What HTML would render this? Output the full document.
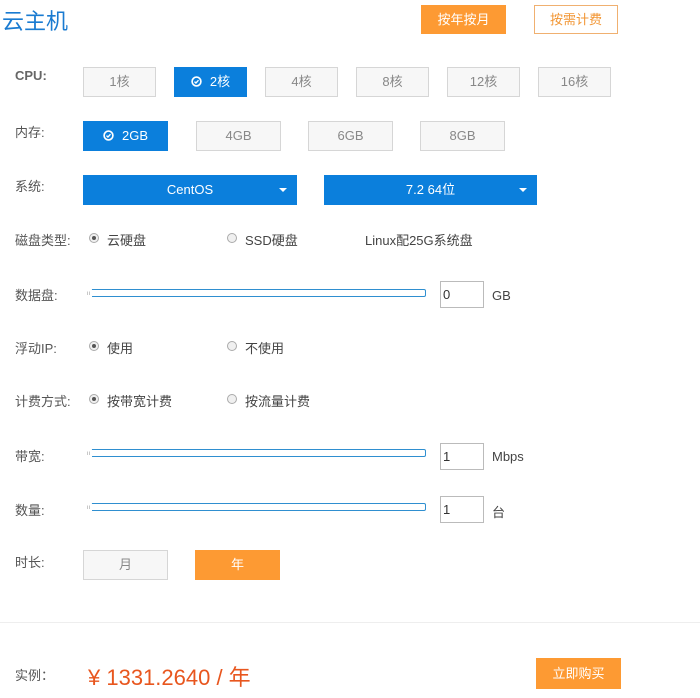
<!DOCTYPE html>
<html><head><meta charset="utf-8"><style>
body{margin:0;width:700px;height:698px;background:#fff;position:relative;overflow:hidden;font-family:"Liberation Sans","Noto Sans CJK SC",sans-serif;font-size:13px;color:#555}
.a{position:absolute}
.lbl{position:absolute;left:15px;font-size:13px;color:#555}
.b{position:absolute;box-sizing:border-box;border:1px solid #d6d6d6;background:#f7f7f7;color:#888;text-align:center;font-size:13px}
.sel{background:#0b7fdc;border-color:#0b7fdc;color:#fff}
.or{background:#fd9a33;border-color:#fd9a33;color:#fff}
.r{position:absolute;width:8px;height:8px;border:1px solid #aaa;border-radius:50%;background:#f0f0f0}
.r.on::after{content:"";position:absolute;left:2px;top:2px;width:4px;height:4px;border-radius:50%;background:#555}
.t{position:absolute;font-size:13px;color:#444}
.sl{position:absolute;left:87px;width:337px;height:6px;border:1.5px solid #2f8fd0;border-radius:2px;background:#fff}
.h{position:absolute;left:85px;width:7px;height:12px;background:#fff;border-radius:2px;font-size:6px;color:#999;text-align:center;line-height:12px}
.in{position:absolute;left:440px;width:44px;height:27px;box-sizing:border-box;border:1px solid #bbb;padding-left:2px;line-height:25px;color:#333;font-size:13px}
.chk{display:inline-block;width:11px;height:11px;margin-right:8px;vertical-align:-1px}
</style></head><body>
<div class="a" style="left:2px;top:4px;font-size:22px;color:#1a7bd1">云主机</div>
<div class="b or" style="left:421px;top:5px;width:85px;height:29px;line-height:27px">按年按月</div>
<div class="b" style="left:534px;top:5px;width:84px;height:29px;line-height:27px;background:#fff;border-color:#f0b070;color:#f29634">按需计费</div>

<div class="lbl" style="top:68px;font-weight:bold;color:#666">CPU:</div>
<div class="b" style="left:83px;top:67px;width:73px;height:30px;line-height:28px">1核</div>
<div class="b sel" style="left:174px;top:67px;width:73px;height:30px;line-height:28px"><svg class="chk" viewBox="0 0 12 12"><circle cx="6" cy="6" r="4.8" fill="none" stroke="#fff" stroke-width="1.8"/><path d="M3.8 6.1l1.6 1.5 2.8-3" fill="none" stroke="#fff" stroke-width="1.5"/></svg>2核</div>
<div class="b" style="left:265px;top:67px;width:73px;height:30px;line-height:28px">4核</div>
<div class="b" style="left:356px;top:67px;width:73px;height:30px;line-height:28px">8核</div>
<div class="b" style="left:447px;top:67px;width:73px;height:30px;line-height:28px">12核</div>
<div class="b" style="left:538px;top:67px;width:73px;height:30px;line-height:28px">16核</div>

<div class="lbl" style="top:122px">内存:</div>
<div class="b sel" style="left:83px;top:121px;width:85px;height:30px;line-height:28px"><svg class="chk" viewBox="0 0 12 12"><circle cx="6" cy="6" r="4.8" fill="none" stroke="#fff" stroke-width="1.8"/><path d="M3.8 6.1l1.6 1.5 2.8-3" fill="none" stroke="#fff" stroke-width="1.5"/></svg>2GB</div>
<div class="b" style="left:196px;top:121px;width:85px;height:30px;line-height:28px">4GB</div>
<div class="b" style="left:308px;top:121px;width:85px;height:30px;line-height:28px">6GB</div>
<div class="b" style="left:420px;top:121px;width:85px;height:30px;line-height:28px">8GB</div>

<div class="lbl" style="top:176px">系统:</div>
<div class="b sel" style="left:83px;top:175px;width:214px;height:30px;line-height:28px">CentOS<span style="position:absolute;right:9px;top:12px;border:4px solid transparent;border-top:4px solid #fff;border-bottom:0"></span></div>
<div class="b sel" style="left:324px;top:175px;width:213px;height:30px;line-height:28px">7.2 64位<span style="position:absolute;right:9px;top:12px;border:4px solid transparent;border-top:4px solid #fff;border-bottom:0"></span></div>

<div class="lbl" style="top:230px">磁盘类型:</div>
<div class="r on" style="left:89px;top:233px"></div><div class="t" style="left:107px;top:230px">云硬盘</div>
<div class="r" style="left:227px;top:233px"></div><div class="t" style="left:245px;top:230px">SSD硬盘</div>
<div class="t" style="left:365px;top:230px">Linux配25G系统盘</div>

<div class="lbl" style="top:285px">数据盘:</div>
<div class="sl" style="top:289px"></div><div class="h" style="top:288px">ıı</div>
<div class="in" style="top:281px">0</div><div class="t" style="left:492px;top:288px">GB</div>

<div class="lbl" style="top:338px">浮动IP:</div>
<div class="r on" style="left:89px;top:341px"></div><div class="t" style="left:107px;top:338px">使用</div>
<div class="r" style="left:227px;top:341px"></div><div class="t" style="left:245px;top:338px">不使用</div>

<div class="lbl" style="top:391px">计费方式:</div>
<div class="r on" style="left:89px;top:394px"></div><div class="t" style="left:107px;top:391px">按带宽计费</div>
<div class="r" style="left:227px;top:394px"></div><div class="t" style="left:245px;top:391px">按流量计费</div>

<div class="lbl" style="top:446px">带宽:</div>
<div class="sl" style="top:449px"></div><div class="h" style="top:448px">ıı</div>
<div class="in" style="top:443px">1</div><div class="t" style="left:492px;top:449px">Mbps</div>

<div class="lbl" style="top:500px">数量:</div>
<div class="sl" style="top:503px"></div><div class="h" style="top:502px">ıı</div>
<div class="in" style="top:496px">1</div><div class="t" style="left:492px;top:502px">台</div>

<div class="lbl" style="top:552px">时长:</div>
<div class="b" style="left:83px;top:550px;width:85px;height:30px;line-height:28px">月</div>
<div class="b or" style="left:195px;top:550px;width:85px;height:30px;line-height:28px">年</div>

<div class="a" style="left:0;top:622px;width:700px;height:1px;background:#eee"></div>
<div class="lbl" style="top:665px">实例：</div>
<div class="a" style="left:88px;top:660px;font-size:22px;color:#e8561e">¥ 1331.2640 / 年</div>
<div class="b or" style="left:536px;top:658px;width:85px;height:31px;line-height:29px">立即购买</div>
</body></html>
